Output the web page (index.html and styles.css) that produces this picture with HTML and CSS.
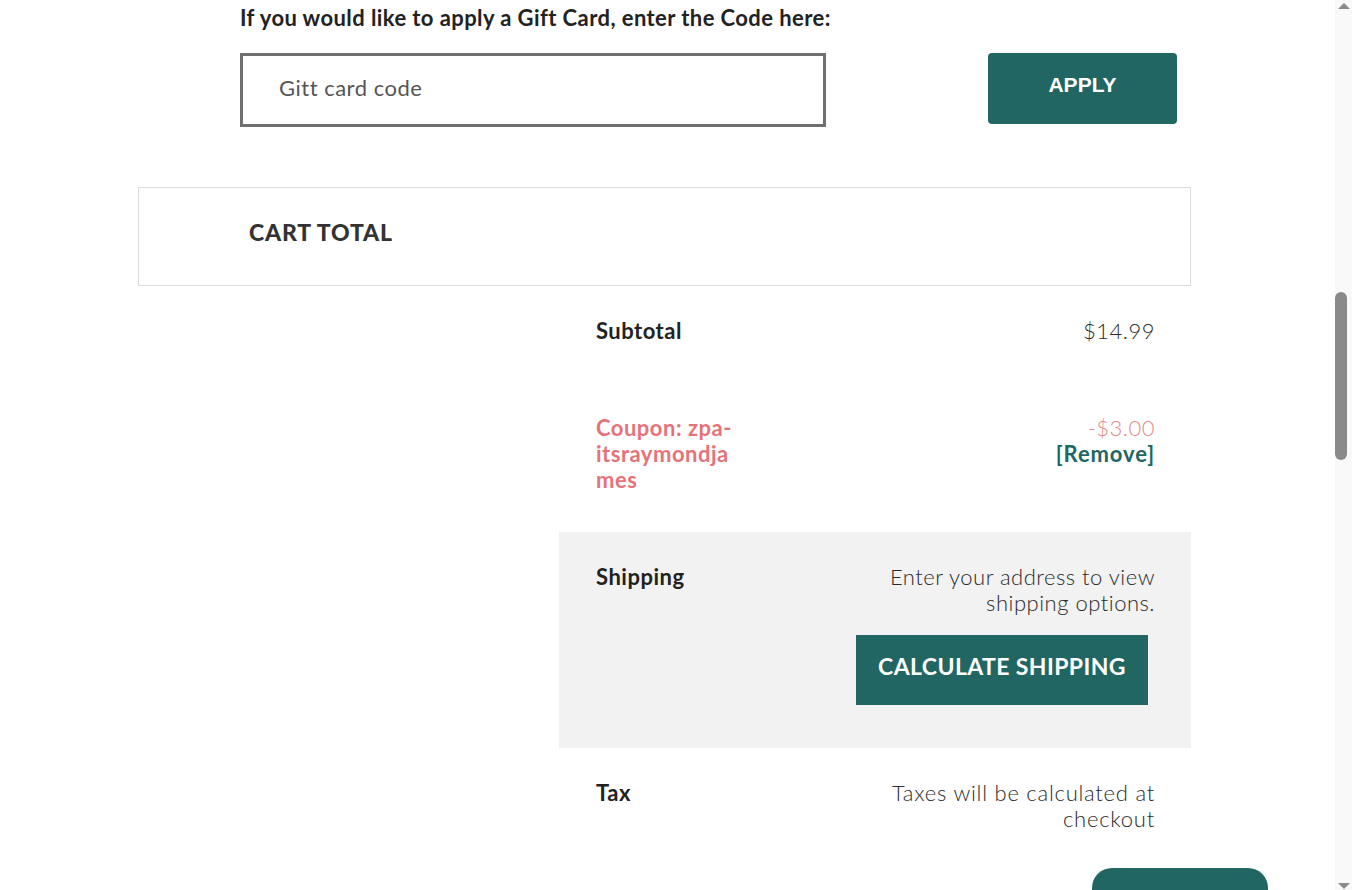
FILE: index.html
```html
<!DOCTYPE html>
<html lang="en">
<head>
    <meta charset="UTF-8">
    <meta name="viewport" content="width=device-width, initial-scale=1.0">
    <title>Cart</title>
    <link rel="stylesheet" href="styles.css">
</head>
<body>
    <div class="page">
        <div class="cart">
            <div class="gift-card">
                <p class="gift-label">If you would like to apply a Gift Card, enter the Code here:</p>
                <form class="gift-form" onsubmit="event.preventDefault()">
                    <input type="text" class="gift-input" placeholder="Gitt card code">
                    <button type="submit" class="apply-button">APPLY</button>
                </form>
            </div>

            <div class="cart-total-head">
                <h2>CART TOTAL</h2>
            </div>

            <div class="totals">
                <div class="totals-row">
                    <div class="totals-label">Subtotal</div>
                    <div class="totals-value">$14.99</div>
                </div>
                <div class="totals-row coupon">
                    <div class="totals-label coupon-label">Coupon: zpa-itsraymondjames</div>
                    <div class="totals-value">
                        <div class="coupon-amount">-$3.00</div>
                        <a href="#" class="remove-link">[Remove]</a>
                    </div>
                </div>
                <div class="totals-row shipping">
                    <div class="totals-label">Shipping</div>
                    <div class="totals-value">
                        <p>Enter your address to view<br>shipping options.</p>
                        <button class="calc-button">CALCULATE SHIPPING</button>
                    </div>
                </div>
                <div class="totals-row">
                    <div class="totals-label">Tax</div>
                    <div class="totals-value tax-note">Taxes will be calculated at<br>checkout</div>
                </div>
            </div>
        </div>
        <div class="checkout-float"></div>
    </div>

    <!-- window scrollbar -->
    <div class="scrollbar">
        <div class="scroll-arrow up"></div>
        <div class="scroll-track">
            <div class="scroll-thumb"></div>
        </div>
        <div class="scroll-arrow down"></div>
    </div>
</body>
</html>
```

FILE: styles.css
```css
* {
    margin: 0;
    padding: 0;
    box-sizing: border-box;
    font-family: Lato, "Noto Sans", sans-serif;
}

body {
    display: flex;
    height: 890px;
    overflow: hidden;
    background-color: #ffffff;
    color: #2b2b2b;
}

.page {
    flex: 1;
    position: relative;
}

.cart {
    width: 1053px;
    margin-left: 138px;
}

/* gift card */
.gift-card {
    padding: 4px 14px 0 102px;
}

.gift-label {
    font-size: 22px;
    line-height: 28px;
    font-weight: 700;
    letter-spacing: 0.42px;
    color: #222;
}

.gift-form {
    display: flex;
    align-items: flex-start;
    margin-top: 21px;
}

.gift-input {
    width: 586px;
    height: 74px;
    border: 3px solid #707070;
    padding: 0 36px 5px;
    font-size: 22px;
    letter-spacing: 0.5px;
    color: #333;
    outline: none;
}

.gift-input::placeholder {
    color: #555;
}

.apply-button {
    margin-left: auto;
    width: 189px;
    height: 71px;
    border: none;
    border-radius: 4px;
    background-color: #216662;
    color: #fff;
    font-family: "Liberation Sans", Arial, sans-serif;
    font-size: 21px;
    font-weight: 700;
    cursor: pointer;
    padding-bottom: 8px;
}

/* cart total */
.cart-total-head {
    margin-top: 60px;
    height: 99px;
    border: 1px solid #dcdcdc;
    display: flex;
    align-items: center;
    padding: 0 0 10px 110px;
}

.cart-total-head h2 {
    font-size: 23px;
    font-weight: 900;
    color: #333;
    letter-spacing: 0.8px;
}

.totals {
    width: 632px;
    margin-left: auto;
}

.totals-row {
    display: flex;
    justify-content: space-between;
    align-items: flex-start;
    padding: 32px 36px 32px 37px;
    font-size: 22px;
    line-height: 26px;
    letter-spacing: 0.5px;
}

.totals-label {
    font-weight: 700;
    color: #222;
}

.totals-value {
    text-align: right;
    font-weight: 300;
    color: #2b2b2b;
}

.tax-note {
    letter-spacing: 0.75px;
}

.coupon {
    padding-top: 39px;
    padding-bottom: 39px;
}

.coupon-label {
    width: 142px;
    color: #e5737a;
    overflow-wrap: anywhere;
}

.coupon-amount {
    color: #e8888a;
}

.remove-link {
    color: #216662;
    font-weight: 700;
    letter-spacing: 0.9px;
    text-decoration: none;
}

.shipping {
    background-color: #f2f2f2;
    padding-bottom: 43px;
}

.calc-button {
    margin-top: 19px;
    margin-right: 7px;
    width: 292px;
    height: 70px;
    border: none;
    padding-bottom: 8px;
    background-color: #216662;
    color: #fff;
    font-size: 23px;
    font-weight: 700;
    letter-spacing: 0.4px;
    cursor: pointer;
}

.checkout-float {
    position: absolute;
    top: 868px;
    right: 67px;
    width: 176px;
    height: 50px;
    border-radius: 20px;
    background-color: #216662;
}

/* scrollbar */
.scrollbar {
    width: 17px;
    display: flex;
    flex-direction: column;
    background-color: #f9f9f9;
}

.scroll-arrow {
    height: 15px;
    display: flex;
    justify-content: center;
    align-items: center;
}

.scroll-arrow::before {
    content: "";
    border-left: 6px solid transparent;
    border-right: 6px solid transparent;
}

.scroll-arrow.up::before {
    border-bottom: 6px solid #8a8a8a;
    margin-bottom: 4px;
}

.scroll-arrow.down::before {
    border-top: 6px solid #8a8a8a;
    margin-top: 6px;
}

.scroll-track {
    flex: 1;
    padding-top: 277px;
}

.scroll-thumb {
    width: 12px;
    height: 168px;
    border-radius: 6px;
    background-color: #8a8a8a;
}
```
